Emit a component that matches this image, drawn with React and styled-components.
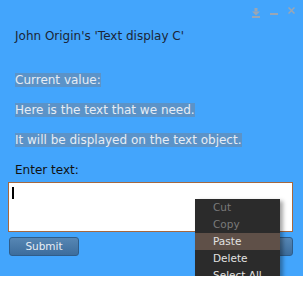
import React from 'react'
import styled, { createGlobalStyle } from 'styled-components'

const GlobalStyle = createGlobalStyle`
  body {
    margin: 0;
    background: #ffffff;
    font-family: "DejaVu Sans", "Liberation Sans", sans-serif;
  }
`

const menuItems = [
  { label: 'Cut', disabled: true },
  { label: 'Copy', disabled: true },
  { label: 'Paste', active: true },
  { label: 'Delete' },
  { label: 'Select All' },
]

function App() {
  return (
    <>
      <GlobalStyle />
      <Floater>
        <Controls>
          <IconBtn $offset={1}>
            <svg width="8" height="10" viewBox="0 0 8 10">
              <rect x="2.5" y="0" width="3" height="3.5" fill="#9aa6b4" />
              <path d="M0 3.5 H8 L4 7.5 Z" fill="#9aa6b4" />
              <rect x="0" y="8" width="8" height="2" fill="#9aa6b4" />
            </svg>
          </IconBtn>
          <IconBtn $offset={6}>
            <svg width="8" height="2" viewBox="0 0 8 2">
              <rect x="0" y="0" width="8" height="2" fill="#9aa6b4" />
            </svg>
          </IconBtn>
          <IconBtn $offset={0}>
            <svg width="7" height="7" viewBox="0 0 7 7">
              <path d="M0.5 0.5 L6.5 6.5 M6.5 0.5 L0.5 6.5" stroke="#9aa6b4" strokeWidth="1.5" />
            </svg>
          </IconBtn>
        </Controls>

        <Title>John Origin's 'Text display C'</Title>

        <Values>
          <Para><Marked>Current value:</Marked></Para>
          <Para><Marked>Here is the text that we need.</Marked></Para>
          <Para><Marked>It will be displayed on the text object.</Marked></Para>
          <Label>Enter text:</Label>
        </Values>

        <InputBox>
          <Caret />
        </InputBox>

        <ButtonRow>
          <Button>Submit</Button>
          <Button>Ignore</Button>
        </ButtonRow>

        <Menu>
          {menuItems.map(item => (
            <MenuItem key={item.label} $disabled={item.disabled} $active={item.active}>
              {item.label}
            </MenuItem>
          ))}
        </Menu>
      </Floater>
    </>
  )
}

export default App

const Floater = styled.div`
  position: relative;
  height: 276px;
  background: #43a5fc;
  padding: 0 10px 0 8px;
  box-sizing: border-box;
`

const Controls = styled.div`
  display: flex;
  justify-content: flex-end;
  align-items: flex-start;
  gap: 10px;
  height: 16px;
  padding-top: 7px;
  margin-right: -2px;
`

const IconBtn = styled.div`
  display: flex;
  line-height: 0;
  margin-top: ${p => p.$offset}px;
`

const Title = styled.div`
  margin: 6px 0 0 7px;
  font-size: 12px;
  line-height: 14px;
  color: #1b2637;
`

const Values = styled.div`
  display: flex;
  flex-direction: column;
  gap: 16px;
  margin: 30px 0 0 7px;
  font-size: 12px;
  line-height: 14px;
`

const Para = styled.div``

const Marked = styled.span`
  background: #5b93c8;
  color: #e6edf5;
`

const Label = styled.div`
  color: #111;
`

const InputBox = styled.div`
  margin-top: 5px;
  height: 50px;
  background: #ffffff;
  border: 1px solid #a5683f;
  box-sizing: border-box;
  padding: 4px 0 0 3px;
`

const Caret = styled.div`
  width: 2px;
  height: 12px;
  background: #000;
`

const ButtonRow = styled.div`
  display: flex;
  justify-content: space-between;
  margin-top: 5px;
  padding-left: 1px;
`

const Button = styled.div`
  width: 70px;
  height: 19px;
  box-sizing: border-box;
  border: 1px solid #2f5d8a;
  border-radius: 3px;
  background: linear-gradient(#5686b4, #3d6d9c);
  color: #e8eef5;
  font-size: 10.5px;
  line-height: 17px;
  text-align: center;
`

const Menu = styled.div`
  position: absolute;
  left: 195px;
  top: 199px;
  width: 85px;
  padding-bottom: 6px;
  background: #2b2b2b;
  box-shadow: 3px 2px 4px rgba(0, 0, 0, 0.35);
`

const MenuItem = styled.div`
  height: 17px;
  line-height: 17px;
  padding-left: 18px;
  font-size: 10.5px;
  color: ${p => (p.$disabled ? '#7a7a7a' : '#e2e2e2')};
  background: ${p => (p.$active ? '#5f5048' : 'transparent')};
`
